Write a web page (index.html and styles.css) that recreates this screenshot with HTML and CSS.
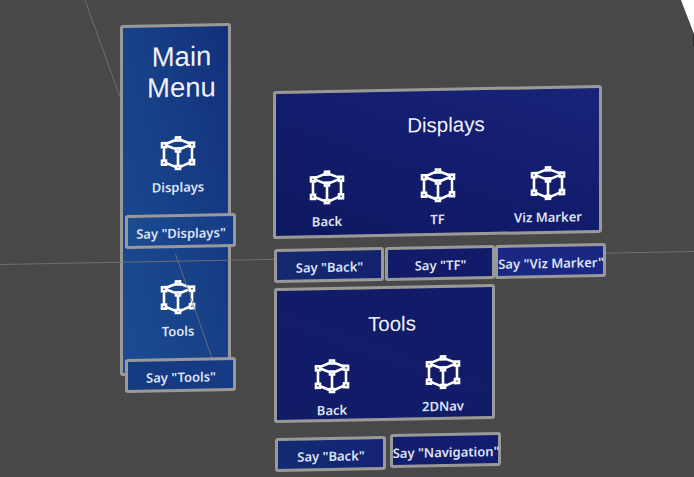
FILE: index.html
```html
<!DOCTYPE html>
<html lang="en">
<head>
<meta charset="utf-8">
<title>Main Menu</title>
<link rel="stylesheet" href="styles.css">
</head>
<body>
<svg class="defs" aria-hidden="true">
  <symbol id="cube" viewBox="0 0 36 36">
    <path class="edges" d="M18 4 32 9.500V27L18 33 4 27V9.500ZM4 9.500 18 15 32 9.500M18 15V33"/>
    <g class="node">
      <rect x="16" y="2.500" width="4" height="3"/>
      <rect x="2" y="8" width="4" height="4"/>
      <rect x="30" y="8" width="4" height="4"/>
      <rect x="16" y="13.500" width="4" height="3"/>
      <rect x="2" y="25.500" width="4" height="4"/>
      <rect x="30" y="25.500" width="4" height="4"/>
      <rect x="16" y="31" width="4" height="3"/>
    </g>
  </symbol>
</svg>
<main class="scene">
  <section class="panel main-menu">
    <h1>Main<br>Menu</h1>
    <div class="item"><svg class="icon"><use href="#cube"/></svg><span>Displays</span></div>
    <div class="item"><svg class="icon"><use href="#cube"/></svg><span>Tools</span></div>
  </section>
  <svg class="rays" viewBox="0 0 694 477">
    <polygon points="681,0 694,0 694,34" fill="#fff"/>
    <path class="edge" d="M693.5 34V46"/>
    <path d="M85 0 120 97M0 264.5 694 251.5M175.500 254 213 361"/>
  </svg>
  <section class="panel displays">
    <h2>Displays</h2>
    <div class="row">
      <div class="item"><svg class="icon"><use href="#cube"/></svg><span>Back</span></div>
      <div class="item"><svg class="icon"><use href="#cube"/></svg><span>TF</span></div>
      <div class="item"><svg class="icon"><use href="#cube"/></svg><span>Viz Marker</span></div>
    </div>
  </section>
  <section class="panel tools">
    <h2>Tools</h2>
    <div class="row">
      <div class="item"><svg class="icon"><use href="#cube"/></svg><span>Back</span></div>
      <div class="item"><svg class="icon"><use href="#cube"/></svg><span>2DNav</span></div>
    </div>
  </section>
  <div class="say say-displays">Say "Displays"</div>
  <div class="say say-tools">Say "Tools"</div>
  <div class="say say-back">Say "Back"</div>
  <div class="say say-tf">Say "TF"</div>
  <div class="say say-viz">Say "Viz Marker"</div>
  <div class="say say-back2">Say "Back"</div>
  <div class="say say-nav">Say "Navigation"</div>
</main>
</body>
</html>
```
FILE: styles.css
```css
* { box-sizing: border-box; }
body { margin: 0; background: #484848; }
.defs { position: absolute; width: 0; height: 0; }
.scene {
  position: relative;
  width: 694px;
  height: 477px;
  overflow: hidden;
  background: #484848;
  color: #dfe3f2;
  font: 600 13px/18px "Noto Sans", "Open Sans", sans-serif;
}
.edges { fill: none; stroke: #fff; stroke-width: 2.6; }
.node rect { fill: #14256f; stroke: #fff; stroke-width: 2.6; }
.rays { position: absolute; inset: 0; width: 694px; height: 477px; }
.rays path { fill: none; stroke: #777; stroke-width: 0.8; }
.rays .edge { stroke: #292929; stroke-width: 1; }

/* panels float freely in the scene, each seen at a slight angle */
.panel, .say {
  position: absolute;
  border: 3px solid #999;
  border-radius: 3px;
  transform: skewY(-1.1deg);
}
.panel h1, .panel h2 {
  margin: 0;
  font-family: "Liberation Sans", Arial, sans-serif;
  font-weight: 400;
  text-align: center;
  color: #f0f2fa;
}
.item { display: flex; flex-direction: column; align-items: center; white-space: nowrap; }
.icon { display: block; width: 36px; height: 36px; }
.row { display: flex; justify-content: space-between; }
.row .item { width: 80px; }

.main-menu {
  left: 120px; top: 24px; width: 111px; height: 351px;
  background: linear-gradient(75deg, #1b4c93, #173f86 55%, #12307b);
}
.main-menu h1 { padding: 14px 0 0 12px; font-size: 27.5px; line-height: 31px; }
.main-menu .item { padding-left: 5px; }
.main-menu h1 + .item { margin-top: 32px; }
.main-menu .item + .item { margin-top: 83px; }
.main-menu .item span { margin-top: 7px; }

.displays {
  left: 273px; top: 88px; width: 329px; height: 148px;
  background: linear-gradient(20deg, #0e1860, #121c6c 50%, #18247a);
}
.displays h2 { padding: 22px 0 0 17px; font-size: 20.5px; line-height: 24px; }
.displays .row { padding: 30px 11px 0; }
.displays .item span { margin-top: 7px; }

.tools {
  left: 274px; top: 286px; width: 221px; height: 135px;
  background: linear-gradient(20deg, #111c67, #121b6a);
}
.tools h2 { padding: 23px 0 0 15px; font-size: 20.5px; line-height: 24px; }
.tools .row { padding: 20px 9px 0 15px; }
.tools .item + .item { margin-top: -1px; }
.tools .item:first-child { margin-top: 1px; }
.tools .item span { margin-top: 7px; }

.say {
  display: flex;
  align-items: center;
  justify-content: center;
  width: 111px;
  height: 34px;
  padding: 4px 0 0 1px;
  white-space: nowrap;
  background: linear-gradient(90deg, #14296f, #13226e);
}
.say-displays { left: 125px; top: 214px; background: linear-gradient(90deg, #1b4c90, #163b86); }
.say-tools { left: 125px; top: 358px; background: linear-gradient(90deg, #153b82, #163a84); }
.say-back { left: 274px; top: 248px; width: 110px; }
.say-tf { left: 385px; top: 246px; width: 110px; background: #111b69; }
.say-viz { left: 495px; top: 244px; background: #1a2884; }
.say-back2 { left: 275px; top: 437px; background: linear-gradient(90deg, #132b75, #142372); }
.say-nav { left: 390px; top: 433px; background: #131d6e; }
```
